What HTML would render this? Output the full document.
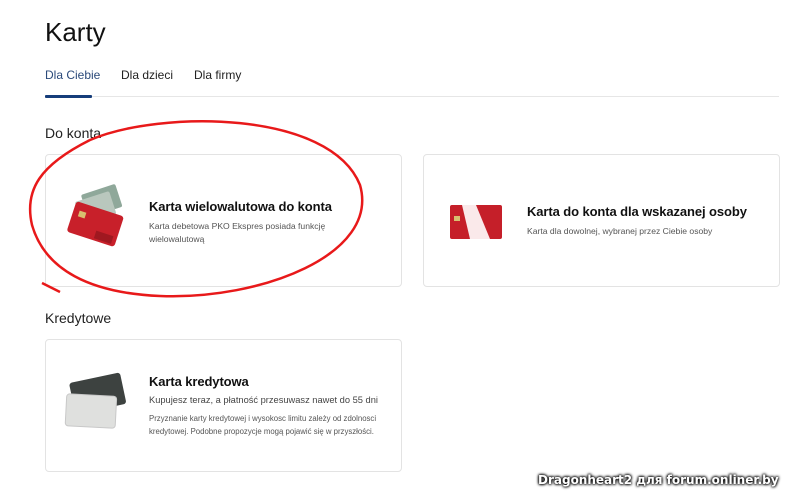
<!DOCTYPE html>
<html><head><meta charset="utf-8"><style>
*{margin:0;padding:0;box-sizing:border-box}
body{width:800px;height:503px;background:#fff;font-family:"Liberation Sans",sans-serif;position:relative;overflow:hidden;color:#111}
.a{position:absolute;white-space:nowrap}
.card{position:absolute;border:1px solid #e3e3e3;border-radius:4px;background:#fff}
.t{font-size:13px;font-weight:bold;color:#111;letter-spacing:-0.1px}
.s{font-size:8.6px;color:#555}
</style></head><body>
<div class="a" style="left:45px;top:17px;font-size:26px;color:#111">Karty</div>
<div class="a" style="left:45px;top:68px;font-size:12px;color:#2b4a7a">Dla Ciebie</div>
<div class="a" style="left:121px;top:68px;font-size:12px;color:#222">Dla dzieci</div>
<div class="a" style="left:194px;top:68px;font-size:12px;color:#222">Dla firmy</div>
<div class="a" style="left:45px;top:96px;width:734px;height:1px;background:#e6e6e6"></div>
<div class="a" style="left:45px;top:95px;width:47px;height:3px;background:#163d7a;border-radius:1px"></div>
<div class="a" style="left:45px;top:125px;font-size:14px;color:#222">Do konta</div>
<div class="a" style="left:45px;top:310px;font-size:14px;color:#222">Kredytowe</div>

<div class="card" style="left:45px;top:154px;width:357px;height:133px"></div>
<div class="card" style="left:423px;top:154px;width:357px;height:133px"></div>
<div class="card" style="left:45px;top:339px;width:357px;height:133px"></div>

<svg class="a" style="left:0;top:0" width="800" height="503">
<g transform="rotate(-18 100 215)"><rect x="88" y="190" width="36" height="24" rx="2" fill="#8fa89a"/><rect x="80" y="195" width="36" height="24" rx="2" fill="#b9c7bd"/></g>
<g transform="rotate(18 95 225)"><rect x="70" y="208" width="50" height="32" rx="3" fill="#c8202a"/><rect x="98" y="230" width="18" height="8" fill="#a01820"/><rect x="76" y="216" width="7" height="6" fill="#d8c070"/></g>
<rect x="450" y="205" width="52" height="34" rx="2" fill="#c51f29"/><path d="M462 205 L476 205 L490 239 L470 239Z" fill="#fff" opacity=".9"/><rect x="454" y="216" width="6" height="5" fill="#d8c070"/>
<g transform="rotate(-12 95 395)"><rect x="72" y="378" width="52" height="32" rx="3" fill="#3d4240"/></g>
<g transform="rotate(3 90 410)"><rect x="66" y="395" width="50" height="32" rx="3" fill="#dfe0de" stroke="#c8c8c8"/></g>
<path d="M90 140 C160 110,330 110,360 185 C380 255,260 300,160 296 C90 293,45 270,32 225 C24 190,40 165,90 140" fill="none" stroke="#e8191a" stroke-width="2.5"/>
<path d="M42 283 L60 292" stroke="#e8191a" stroke-width="2.5"/>
</svg>

<div class="a t" style="left:149px;top:199px">Karta wielowalutowa do konta</div>
<div class="a s" style="left:149px;top:220px;line-height:13px">Karta debetowa PKO Ekspres posiada funkcję<br>wielowalutową</div>
<div class="a t" style="left:527px;top:204px">Karta do konta dla wskazanej osoby</div>
<div class="a s" style="left:527px;top:226px">Karta dla dowolnej, wybranej przez Ciebie osoby</div>
<div class="a t" style="left:149px;top:374px">Karta kredytowa</div>
<div class="a" style="left:149px;top:395px;font-size:9.3px;color:#444">Kupujesz teraz, a płatność przesuwasz nawet do 55 dni</div>
<div class="a" style="left:149px;top:412px;font-size:7.8px;color:#555;line-height:13px">Przyznanie karty kredytowej i wysokosc limitu zależy od zdolnosci<br>kredytowej. Podobne propozycje mogą pojawić się w przyszłości.</div>
<div class="a" style="left:538px;top:473px;font-size:12px;font-weight:bold;color:#fff;text-shadow:0 0 3px #000,0 0 3px #000,0 0 2px #000;font-family:'DejaVu Sans',sans-serif">Dragonheart2 для forum.onliner.by</div>
</body></html>
